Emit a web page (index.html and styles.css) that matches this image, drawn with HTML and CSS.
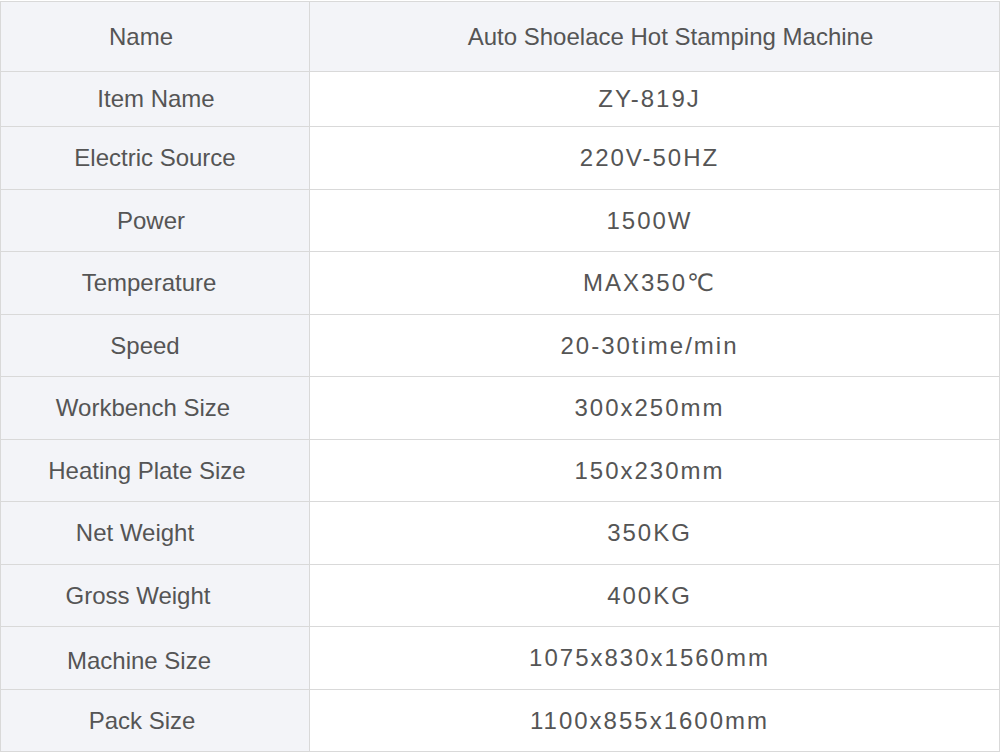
FILE: index.html
```html
<!DOCTYPE html>
<html lang="en">
<head>
<meta charset="utf-8">
<title>Auto Shoelace Hot Stamping Machine</title>
<link rel="stylesheet" href="styles.css">
</head>
<body>
<div class="spec">
  <div class="cell key head s-14">Name</div>
  <div class="cell val head v-16">Auto Shoelace Hot Stamping Machine</div>

  <div class="cell key r55 s1">Item Name</div>
  <div class="cell val r55">ZY-819J</div>

  <div class="cell key r63 s0">Electric Source</div>
  <div class="cell val r63">220V-50HZ</div>

  <div class="cell key r62 s-4">Power</div>
  <div class="cell val r62">1500W</div>

  <div class="cell key r63 s-6">Temperature</div>
  <div class="cell val r63">MAX350℃</div>

  <div class="cell key r62 s-10">Speed</div>
  <div class="cell val r62">20-30time/min</div>

  <div class="cell key r63 s-12">Workbench Size</div>
  <div class="cell val r63">300x250mm</div>

  <div class="cell key r62 s-8">Heating Plate Size</div>
  <div class="cell val r62">150x230mm</div>

  <div class="cell key r63 s-20">Net Weight</div>
  <div class="cell val r63">350KG</div>

  <div class="cell key r62 s-17">Gross Weight</div>
  <div class="cell val r62">400KG</div>

  <div class="cell key r63 s-16 low">Machine Size</div>
  <div class="cell val r63">1075x830x1560mm</div>

  <div class="cell key r62 s-13">Pack Size</div>
  <div class="cell val r62">1100x855x1600mm</div>
</div>
</body>
</html>
```

FILE: styles.css
```css
* { box-sizing: border-box; }

html, body {
  margin: 0;
  padding: 0;
  background: #ffffff;
}

body {
  font-family: "Liberation Sans", Arial, "DejaVu Sans", sans-serif;
  color: #555555;
}

.spec {
  margin-top: 1px;
  width: 1000px;
  display: grid;
  grid-template-columns: 309px 1fr;
  border: 1px solid #d9d9d9;
  border-bottom: none;
}

.cell {
  display: flex;
  align-items: center;
  justify-content: center;
  border-bottom: 1px solid #d9d9d9;
  font-size: 24px;
  line-height: 1;
  white-space: nowrap;
}

.key {
  background: #f3f4f8;
  border-right: 1px solid #d9d9d9;
}

.val {
  letter-spacing: 2px;
  padding-right: 10px;
  padding-left: 0;
}

.head { height: 70px; }
.head.val {
  background: #f3f4f8;
  letter-spacing: 0;
  padding-left: 32px;
  padding-right: 0;
}
.r55 { height: 55px; }
.r62 { height: 62px; }
.r63 { height: 63px; }

.low { padding-top: 6px; }

/* horizontal nudges of the label column */
.s1 { padding-left: 2px; }
.s0 { padding: 0; }
.s-4 { padding-right: 8px; }
.s-6 { padding-right: 12px; }
.s-8 { padding-right: 16px; }
.s-10 { padding-right: 20px; }
.s-12 { padding-right: 24px; }
.s-13 { padding-right: 26px; }
.s-14 { padding-right: 28px; }
.s-16 { padding-right: 32px; }
.s-17 { padding-right: 34px; }
.s-20 { padding-right: 40px; }
```
